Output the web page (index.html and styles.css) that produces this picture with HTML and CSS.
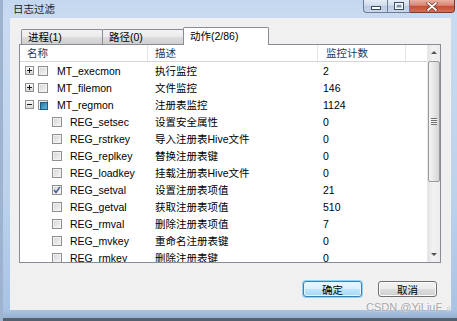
FILE: index.html
```html
<!DOCTYPE html>
<html lang="zh-CN">
<head>
  <meta charset="UTF-8" />
  <title>日志过滤</title>
  <link rel="stylesheet" href="styles.css">
</head>
<body>
  <div class="window">
    <div class="titlebar">
      <span class="title">日志过滤</span>
      <div class="caption">
        <span class="cap-btn min">
          <svg width="10" height="5" viewBox="0 0 10 5"><rect x="0.5" y="1.5" width="9" height="3" fill="#fff" stroke="#3b4a63"/></svg>
        </span>
        <span class="cap-btn max">
          <svg width="10" height="8" viewBox="0 0 10 8"><rect x="0.5" y="0.5" width="9" height="7" fill="none" stroke="#3b4a63"/><rect x="1.5" y="1.5" width="7" height="5" fill="none" stroke="#fff"/><rect x="3" y="3" width="4" height="2" fill="#3b4a63" opacity="0.5"/></svg>
        </span>
        <span class="cap-btn close">
          <svg width="12" height="9" viewBox="0 0 12 9"><path d="M2 1 L10 8 M10 1 L2 8" stroke="#6b2a1f" stroke-width="3.2" stroke-linecap="round"/><path d="M2 1 L10 8 M10 1 L2 8" stroke="#fff" stroke-width="1.8" stroke-linecap="round"/></svg>
        </span>
      </div>
    </div>

    <div class="client">
      <div class="tabs">
        <div class="tab first">进程(1)</div>
        <div class="tab">路径(0)</div>
        <div class="tab active">动作(2/86)</div>
      </div>

      <div class="tabpage">
        <div class="grid">
          <div class="header">
            <div class="hcell c1">名称</div>
            <div class="hcell c2">描述</div>
            <div class="hcell c3">监控计数</div>
            <div class="hcell fill"></div>
          </div>
          <div class="rows">
            <div class="row">
              <div class="name"><span class="exp plus"></span><span class="cb"></span><span class="label">MT_execmon</span></div>
              <div class="desc">执行监控</div>
              <div class="count">2</div>
            </div>
            <div class="row">
              <div class="name"><span class="exp plus"></span><span class="cb"></span><span class="label">MT_filemon</span></div>
              <div class="desc">文件监控</div>
              <div class="count">146</div>
            </div>
            <div class="row">
              <div class="name"><span class="exp"></span><span class="cb mixed"></span><span class="label">MT_regmon</span></div>
              <div class="desc">注册表监控</div>
              <div class="count">1124</div>
            </div>
            <div class="row">
              <div class="name child"><span class="cb"></span><span class="label">REG_setsec</span></div>
              <div class="desc">设置安全属性</div>
              <div class="count">0</div>
            </div>
            <div class="row">
              <div class="name child"><span class="cb"></span><span class="label">REG_rstrkey</span></div>
              <div class="desc">导入注册表Hive文件</div>
              <div class="count">0</div>
            </div>
            <div class="row">
              <div class="name child"><span class="cb"></span><span class="label">REG_replkey</span></div>
              <div class="desc">替换注册表键</div>
              <div class="count">0</div>
            </div>
            <div class="row">
              <div class="name child"><span class="cb"></span><span class="label">REG_loadkey</span></div>
              <div class="desc">挂载注册表Hive文件</div>
              <div class="count">0</div>
            </div>
            <div class="row">
              <div class="name child"><span class="cb checked"><svg width="8" height="8" viewBox="0 0 8 8"><path d="M1 4 L3 6.5 L7 0.8" fill="none" stroke="#3d5a8f" stroke-width="1.4"/></svg></span><span class="label">REG_setval</span></div>
              <div class="desc">设置注册表项值</div>
              <div class="count">21</div>
            </div>
            <div class="row">
              <div class="name child"><span class="cb"></span><span class="label">REG_getval</span></div>
              <div class="desc">获取注册表项值</div>
              <div class="count">510</div>
            </div>
            <div class="row">
              <div class="name child"><span class="cb"></span><span class="label">REG_rmval</span></div>
              <div class="desc">删除注册表项值</div>
              <div class="count">7</div>
            </div>
            <div class="row">
              <div class="name child"><span class="cb"></span><span class="label">REG_mvkey</span></div>
              <div class="desc">重命名注册表键</div>
              <div class="count">0</div>
            </div>
            <div class="row">
              <div class="name child"><span class="cb"></span><span class="label">REG_rmkey</span></div>
              <div class="desc">删除注册表键</div>
              <div class="count">0</div>
            </div>
          </div>
        </div>

        <div class="scrollbar">
          <div class="arrow up"></div>
          <div class="thumb"><span class="grip"></span></div>
          <div class="track"></div>
          <div class="arrow down"></div>
        </div>
      </div>

      <div class="buttons">
        <button class="btn default">确定</button>
        <button class="btn">取消</button>
      </div>
    </div>

    <div class="watermark">CSDN @YiLiuF<span class="dots">.ıl</span></div>
  </div>
</body>
</html>
```

FILE: styles.css
```css
* {
  box-sizing: border-box;
}

body {
  margin: 0;
  font-family: "Liberation Sans", "Noto Sans CJK SC", sans-serif;
  font-size: 10.5px;
  color: #000;
  background: #fff;
}

.window {
  position: relative;
  width: 457px;
  height: 321px;
  display: flex;
  flex-direction: column;
  overflow: hidden;
  background: linear-gradient(#c3d7ee, #c9dbf0 16px, #bcd2eb 200px, #a9c3e3 310px, #8ea9cc);
  box-shadow: inset 3px 0 0 #9db3cf, inset 0 -3px 0 #55606e;
}

.titlebar {
  height: 18px;
  display: flex;
  align-items: flex-start;
}

.title {
  padding: 2px 0 0 13px;
  line-height: 14px;
  color: #1c1c1c;
}

.caption {
  margin-left: auto;
  margin-right: 2px;
  display: flex;
}

.cap-btn {
  height: 13px;
  display: flex;
  align-items: center;
  justify-content: center;
  border: 1px solid #6e7d93;
  border-top: none;
}

.min {
  width: 24px;
  border-radius: 0 0 0 4px;
  border-right: none;
  padding-top: 3px;
  background: linear-gradient(#e4ecf6, #d1ddec 45%, #bac9de 50%, #c9d8ec);
}

.max {
  width: 23px;
  background: linear-gradient(#e4ecf6, #d1ddec 45%, #bac9de 50%, #c9d8ec);
}

.close {
  width: 45px;
  border-left: none;
  border-color: #7f3a2c;
  border-radius: 0 0 4px 0;
  background: linear-gradient(#eab1a4, #d98573 45%, #c74b32 50%, #d4705a);
}

.client {
  margin: 0 6px 0 10px;
  height: 292px;
  padding: 9px 10px 0 9px;
  background: #f0f0f0;
  display: flex;
  flex-direction: column;
}

.tabs {
  height: 17px;
  display: flex;
  align-items: flex-end;
  padding-left: 2px;
  position: relative;
  z-index: 1;
}

.tab {
  width: 84px;
  height: 15px;
  margin-left: -1px;
  padding-left: 6px;
  line-height: 14px;
  border: 1px solid #898c95;
  border-bottom: none;
  border-radius: 2px 2px 0 0;
  background: linear-gradient(#f3f3f3, #ebebeb 50%, #dddddd 50%, #cfcfcf);
}

.tab.first {
  width: 82px;
  margin-left: 0;
}

.tab.active {
  width: 86px;
  height: 18px;
  margin: 0 0 -1px -3px;
  padding-left: 6px;
  line-height: 16px;
  background: #fff;
}

.tabpage {
  height: 219px;
  border: 1px solid #898c95;
  background: #fff;
  display: flex;
}

.grid {
  flex: 1;
  display: flex;
  flex-direction: column;
  overflow: hidden;
}

.header {
  height: 17px;
  display: flex;
  border-bottom: 1px solid #d5d5d5;
  color: #1e395b;
}

.hcell {
  line-height: 16px;
  border-right: 1px solid #e5e5e5;
}

.hcell.c1 {
  width: 128px;
  padding-left: 7px;
}

.hcell.c2 {
  width: 170px;
  padding-left: 7px;
}

.hcell.c3 {
  width: 88px;
  padding-left: 8px;
}

.hcell.fill {
  flex: 1;
  border-right: none;
}

.rows {
  flex: 1;
  overflow: hidden;
}

.row {
  height: 17px;
  display: grid;
  grid-template-columns: 128px 170px 1fr;
  align-items: center;
}

.name {
  display: flex;
  align-items: center;
  padding-left: 5px;
}

.name.child {
  padding-left: 32px;
}

.desc {
  padding-left: 7px;
}

.count {
  padding-left: 5px;
}

.label {
  margin-left: 9px;
}

.name.child .label {
  margin-left: 8px;
}

.exp {
  position: relative;
  width: 9px;
  height: 9px;
  margin-right: 4px;
  border: 1px solid #919191;
  background: linear-gradient(#fdfdfd, #d5d5d5);
}

.exp::before {
  content: "";
  position: absolute;
  left: 1px;
  top: 3px;
  width: 5px;
  height: 1px;
  background: #1c1c1c;
}

.exp.plus::after {
  content: "";
  position: absolute;
  left: 3px;
  top: 1px;
  width: 1px;
  height: 5px;
  background: #1c1c1c;
}

.cb {
  position: relative;
  width: 10px;
  height: 10px;
  display: flex;
  align-items: center;
  justify-content: center;
  border: 1px solid #8e8f8f;
  background: linear-gradient(135deg, #d2d4d8, #f7f7f7);
  box-shadow: inset 0 0 0 1px #f2f2f2;
}

.cb.mixed::after {
  content: "";
  position: absolute;
  left: 1px;
  top: 1px;
  width: 6px;
  height: 6px;
  border: 1px solid #1d5a86;
  background: linear-gradient(135deg, #2a77aa, #64bde0);
}

.scrollbar {
  width: 13px;
  display: flex;
  flex-direction: column;
  background: linear-gradient(to right, #e3e3e3, #f2f2f2 40%, #ececec);
  border-left: 1px solid #e8e8e8;
}

.arrow {
  height: 16px;
  position: relative;
}

.arrow::after {
  content: "";
  position: absolute;
  left: 3px;
  border-left: 3px solid transparent;
  border-right: 3px solid transparent;
}

.arrow.up::after {
  top: 6px;
  border-bottom: 3px solid #555;
}

.arrow.down::after {
  top: 7px;
  border-top: 3px solid #555;
}

.thumb {
  height: 121px;
  margin: 0 0 0 0;
  display: flex;
  align-items: center;
  justify-content: center;
  border: 1px solid #9a9a9a;
  border-radius: 2px;
  background: linear-gradient(to right, #f4f4f4, #e6e6e6 50%, #d4d4d4);
}

.grip {
  width: 6px;
  height: 7px;
  background: repeating-linear-gradient(#6f6f6f 0 1px, #f4f4f4 1px 2px);
}

.track {
  flex: 1;
}

.buttons {
  display: flex;
  justify-content: flex-end;
  gap: 16px;
  margin-top: 18px;
  padding-right: 4px;
}

.btn {
  width: 59px;
  height: 16px;
  padding: 0;
  font-family: inherit;
  font-size: 10.5px;
  color: #000;
  border: 1px solid #707070;
  border-radius: 3px;
  background: linear-gradient(#f2f2f2, #ebebeb 50%, #dddddd 50%, #cfcfcf);
  box-shadow: inset 0 0 0 1px #fcfcfc;
}

.btn.default {
  border-color: #3c7fb1;
  background: linear-gradient(#ecf7fd, #dbf0fc 50%, #bee6fd 50%, #a7d9f5);
  box-shadow: 0 0 0 1px #8fd3f4, inset 0 0 0 1px #e6f5fd;
}

.watermark {
  position: absolute;
  left: 366px;
  top: 301px;
  font-size: 11px;
  color: #a5a8ad;
  text-shadow: 0 0 2px #fff;
}

.dots {
  margin-left: 2px;
  font-size: 8px;
  color: #c2c5ca;
}
```
